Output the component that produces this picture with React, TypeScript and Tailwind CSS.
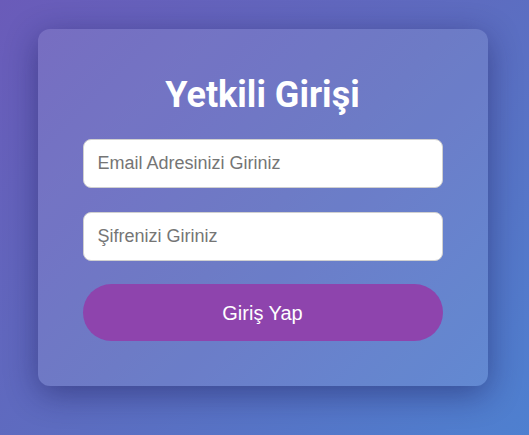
import React from "react";

export default function App() {
  return (
    <div className="w-[529px] h-[435px] flex items-center justify-center bg-[linear-gradient(135deg,#6a5bb9_0%,#5d6cc0_50%,#4e80d0_100%)]">
      <div className="w-[450px] h-[357px] mb-[20px] mr-[4px] rounded-[12px] bg-white/10 shadow-[0_8px_32px_rgba(20,20,80,0.45)] px-[45px] pt-[45px] flex flex-col font-['Liberation_Sans',Arial,sans-serif]">
        <h2 className="text-white text-[36px] font-bold text-center leading-[42px] mb-[23px] font-['Roboto',sans-serif]">
          Yetkili Girişi
        </h2>
        <input
          type="email"
          placeholder="Email Adresinizi Giriniz"
          className="h-[49px] w-full rounded-[8px] border border-[#d0d0d0] bg-white px-[14px] text-[18px] text-[#333] placeholder:text-[#757575] outline-none mb-[24px]"
        />
        <input
          type="password"
          placeholder="Şifrenizi Giriniz"
          className="h-[49px] w-full rounded-[8px] border border-[#d0d0d0] bg-white px-[14px] text-[18px] text-[#333] placeholder:text-[#757575] outline-none mb-[23px]"
        />
        <button className="h-[57px] w-full rounded-full bg-[#8e44ad] text-white text-[20px]">
          Giriş Yap
        </button>
      </div>
    </div>
  );
}
